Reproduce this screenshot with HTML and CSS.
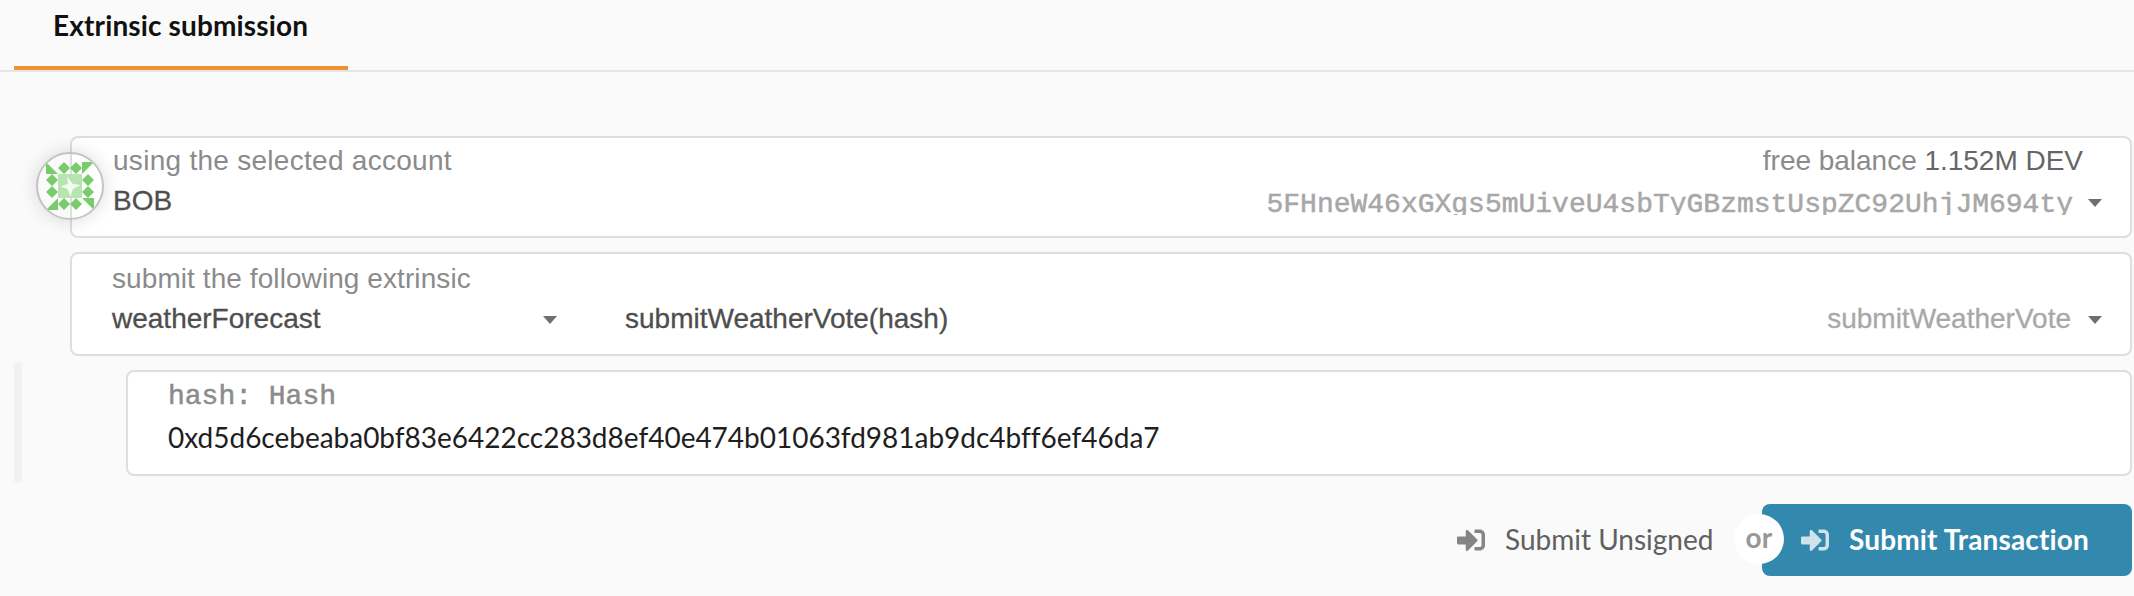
FILE: index.html
```html
<!DOCTYPE html>
<html lang="en">
<head>
<meta charset="utf-8">
<title>Extrinsics</title>
<link rel="stylesheet" href="styles.css">
</head>
<body>
<header class="tabs"><div class="tab">Extrinsic submission</div></header>
<main class="content">
  <section class="box account">
    <svg class="identicon" viewBox="0 0 64 64" aria-hidden="true">
      <path fill="#b8e4b2" d="M20 20h24v24H20z"/>
      <path fill="#78cc6c" d="M8 8v12h12zM44 8h12L44 20zM8 56l12-12v12zM44 44h12v12z"/>
      <path fill="#78cc6c" d="M26 8l6 6-6 6-6-6zM38 8l6 6-6 6-6-6zM26 44l6 6-6 6-6-6zM38 44l6 6-6 6-6-6zM14 20l6 6-6 6-6-6zM14 32l6 6-6 6-6-6zM50 20l6 6-6 6-6-6zM50 32l6 6-6 6-6-6z"/>
      <path fill="#f5fbf4" d="M29 22.500l6 7.500 7.500 1-7.500 4-2.500 7.500-3-7.500-7-2.500 7.500-2.500z"/>
    </svg>
    <div class="line">
      <span class="label">using the selected account</span>
      <span class="label balance">free balance <span class="amount">1.152M DEV</span></span>
    </div>
    <div class="line">
      <span class="value">BOB</span>
      <span class="end"><span class="address">5FHneW46xGXgs5mUiveU4sbTyGBzmstUspZC92UhjJM694ty</span><i class="caret"></i></span>
    </div>
  </section>
  <section class="box extrinsic">
    <div class="line"><span class="label submit">submit the following extrinsic</span></div>
    <div class="line">
      <span class="module"><span class="value forecast">weatherForecast</span><i class="caret"></i></span>
      <span class="value method">submitWeatherVote(hash)</span>
      <span class="end"><span class="value faded">submitWeatherVote</span><i class="caret"></i></span>
    </div>
  </section>
  <div class="params">
    <section class="box param">
      <div class="line"><span class="type">hash: Hash</span></div>
      <div class="line"><span class="hash">0xd5d6cebeaba0bf83e6422cc283d8ef40e474b01063fd981ab9dc4bff6ef46da7</span></div>
    </section>
  </div>
  <div class="buttons">
    <button class="button plain"><svg viewBox="0 0 512 512"><path d="M416 448h-84c-6.600 0-12-5.400-12-12v-40c0-6.600 5.400-12 12-12h84c17.700 0 32-14.300 32-32V160c0-17.700-14.300-32-32-32h-84c-6.600 0-12-5.400-12-12V76c0-6.600 5.400-12 12-12h84c53 0 96 43 96 96v192c0 53-43 96-96 96zm-47-201L201 79c-15-15-41-4.500-41 17v96H24c-13.300 0-24 10.700-24 24v96c0 13.300 10.700 24 24 24h136v96c0 21.500 26 32 41 17l168-168c9.300-9.400 9.300-24.600 0-34z"/></svg><span>Submit Unsigned</span></button>
    <button class="button primary"><span class="or">or</span><svg viewBox="0 0 512 512"><path d="M416 448h-84c-6.600 0-12-5.400-12-12v-40c0-6.600 5.400-12 12-12h84c17.700 0 32-14.300 32-32V160c0-17.700-14.300-32-32-32h-84c-6.600 0-12-5.400-12-12V76c0-6.600 5.400-12 12-12h84c53 0 96 43 96 96v192c0 53-43 96-96 96zm-47-201L201 79c-15-15-41-4.500-41 17v96H24c-13.300 0-24 10.700-24 24v96c0 13.300 10.700 24 24 24h136v96c0 21.500 26 32 41 17l168-168c9.300-9.400 9.300-24.600 0-34z"/></svg><span>Submit Transaction</span></button>
  </div>
</main>
</body>
</html>
```
FILE: styles.css
```css
* { box-sizing: border-box; }
body {
  margin: 0;
  height: 596px;
  overflow: hidden;
  background: #fafafa;
  font: 28px/40px "Liberation Sans", Arial, sans-serif;
  color: #4e4e4e;
}
.tabs {
  display: flex;
  height: 72px;
  padding-left: 14px;
  border-bottom: 2px solid #e6e6e6;
}
.tab {
  width: 334px;
  height: 70px;
  padding: 5px 0 0 39px;
  border-bottom: 4px solid #f19135;
  color: #111;
  font-family: Lato, sans-serif;
  font-weight: 700;
  letter-spacing: 0.14px;
  white-space: nowrap;
}
.content { padding: 64px 2px 0 0; }
.box {
  position: relative;
  margin-left: 70px;
  border: 2px solid #dededf;
  border-radius: 8px;
  background: #fff;
}
.account { height: 102px; padding: 3px 28px 0 41px; }
.extrinsic { height: 104px; margin-top: 14px; padding: 5px 28px 0 40px; }
.line { display: flex; height: 40px; align-items: center; white-space: nowrap; }
.label { color: #8b8b8b; letter-spacing: 0.28px; }
.submit { letter-spacing: 0.08px; }
.balance { margin: 0 19px 0 auto; letter-spacing: -0.02px; }
.amount { color: #666; }
.value { -webkit-text-stroke: 0.3px; }
.end { display: flex; align-items: center; margin-left: auto; }
.address {
  height: 27px;
  margin: 0 -1px 0 0;
  overflow: hidden;
  line-height: 34px;
  color: #a7a7a7;
  font-family: "Liberation Mono", monospace;
  -webkit-text-stroke: 0.5px;
}
.caret {
  flex: none;
  border: 7px solid transparent;
  border-top: 8px solid #6f6f6f;
  border-bottom: 0;
  margin: 4px 0 0 16px;
}
.identicon {
  position: absolute;
  left: -36px;
  top: 14px;
  width: 68px;
  height: 68px;
  border: 2px solid #c3c3c3;
  border-radius: 50%;
  box-shadow: 0 0 18px rgba(0, 0, 0, 0.14);
}
.module { display: flex; align-items: center; justify-content: space-between; width: 445px; }
.extrinsic .caret { margin-top: 2px; }
.method { margin-left: 68px; }
.faded { color: #a8a8a8; margin-right: 1px; }
.params {
  margin: 6px 0 0 14px;
  padding: 8px 0 6px;
  border-left: 8px solid #f2f2f2;
}
.param { height: 106px; margin-left: 104px; padding: 5px 40px 0; }
.type { color: #8b8b8b; font-family: "Liberation Mono", monospace; -webkit-text-stroke: 0.5px; }
.hash { color: #1e1e1e; font-family: Lato, sans-serif; letter-spacing: -0.015px; }
.buttons { display: flex; justify-content: flex-end; margin-top: 22px; }
.button {
  position: relative;
  display: flex;
  align-items: center;
  height: 72px;
  border: 0;
  padding: 0;
  background: none;
  font: 28px/40px Lato, sans-serif;
  color: #5f6061;
  white-space: nowrap;
}
.button svg { width: 28px; height: 28px; margin-right: 20px; fill: #858585; }
.button > svg + span { padding-bottom: 2px; }
.plain { width: 305px; }
.primary {
  width: 370px;
  padding-left: 39px;
  border-radius: 8px;
  background: #3388ad;
  color: #fff;
  font-weight: 700;
  letter-spacing: 0.14px;
}
.primary svg { fill: #d0e2ea; }
.or {
  position: absolute;
  left: -28px;
  top: 10px;
  width: 50px;
  height: 50px;
  border-radius: 50%;
  background: #fff;
  color: #979797;
  line-height: 46px;
  text-align: center;
}
```
